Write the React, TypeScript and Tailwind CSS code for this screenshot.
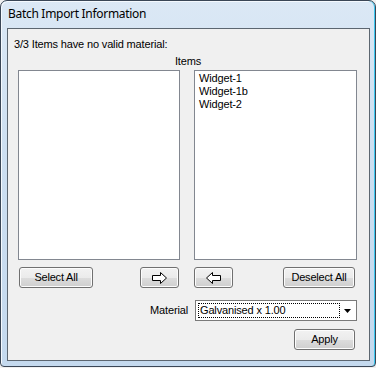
import React from 'react'

const btn =
  'flex items-center justify-center h-[21px] rounded-[3px] border border-[#707070] bg-[linear-gradient(to_bottom,#f2f2f2_0%,#ebebeb_50%,#dddddd_50%,#cfcfcf_100%)] shadow-[inset_0_0_0_1px_#fcfcfc] text-[11px] text-black tracking-[-0.2px]'

function ArrowRight() {
  return (
    <svg width="17" height="12" viewBox="0 0 17 12">
      <path d="M1.5 3.5h8v-3l6 5.5-6 5.5v-3h-8z" fill="#fff" stroke="#000" strokeWidth="1" />
    </svg>
  )
}

function ArrowLeft() {
  return (
    <svg width="17" height="12" viewBox="0 0 17 12">
      <path d="M15.5 3.5h-8v-3l-6 5.5 6 5.5v-3h8z" fill="#fff" stroke="#000" strokeWidth="1" />
    </svg>
  )
}

export default function App() {
  const items = ['Widget-1', 'Widget-1b', 'Widget-2']

  return (
    <div className="w-[376px] h-[368px] bg-[#f0f0f0]" style={{ fontFamily: '"Liberation Sans", Arial, sans-serif' }}>
      {/* Window frame */}
      <div className="w-[376px] h-[367px] rounded-t-[7px] rounded-b-[4px] border border-[#3a4656] bg-[linear-gradient(to_bottom,#dbe8f5_0%,#cddff1_40%,#c4d9ee_100%)] shadow-[inset_-1px_0_0_#3cc8f0,inset_1px_1px_0_#f4f9fe] pl-[6px] pr-[5px] pb-[5px] flex flex-col">
        <div className="h-[27px] flex items-center pl-[1px] pb-[1px] text-[12px] text-black tracking-[-0.3px]" style={{ fontFamily: '"Noto Sans", "Open Sans", sans-serif' }}>
          Batch Import Information
        </div>

        {/* Client area */}
        <div className="flex-1 border border-[#5c6670] bg-[#f0f0f0] pl-[10px] pr-[12px] flex flex-col text-[11px] text-black tracking-[-0.15px]">
          <div className="h-[14px] mt-[8px] leading-[14px] ml-[-4px]">3/3 Items have no valid material:</div>
          <div className="h-[14px] mt-[3px] leading-[14px] text-center pl-[1px]">Items</div>

          <div className="mt-[2px] flex justify-between">
            <div className="w-[162px] h-[190px] border border-[#828790] bg-white" />
            <div className="w-[163px] h-[190px] border border-[#828790] bg-white px-[4px] pt-[1px]">
              {items.map((it) => (
                <div key={it} className="h-[13px] leading-[13px] text-[11px]">{it}</div>
              ))}
            </div>
          </div>

          <div className="mt-[7px] flex items-center">
            <button className={`${btn} w-[74px] ml-[1px]`}>Select All</button>
            <button className={`${btn} w-[39px] ml-[47px]`}><ArrowRight /></button>
            <button className={`${btn} w-[39px] ml-[15px]`}><ArrowLeft /></button>
            <button className={`${btn} w-[72px] ml-auto mr-[2px]`}>Deselect All</button>
          </div>

          <div className="mt-[12px] flex items-center justify-end">
            <span className="mr-[7px]">Material</span>
            <div className="w-[162px] h-[21px] border border-[#7a7a7a] bg-white flex items-center p-[2px]">
              <div className="flex-1 h-full border border-dotted border-black flex items-center pl-[1px]">Galvanised x 1.00</div>
              <div className="w-[14px] h-full flex items-center justify-center">
                <svg width="7" height="4" viewBox="0 0 7 4"><path d="M0 0h7L3.5 4z" fill="#000" /></svg>
              </div>
            </div>
          </div>

          <div className="mt-[8px] flex justify-end">
            <button className={`${btn} w-[61px] mr-[2px]`}>Apply</button>
          </div>
        </div>
      </div>
    </div>
  )
}
